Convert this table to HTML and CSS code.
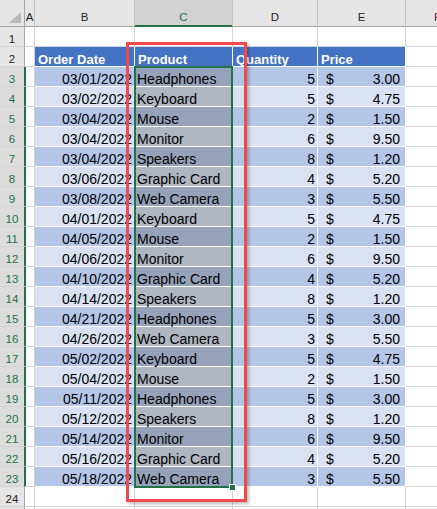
FILE: index.html
```html
<!DOCTYPE html>
<html>
<head>
<meta charset="utf-8">
<link rel="stylesheet" href="styles.css">
</head>
<body>
<div class="sheet">
  <div class="corner"><svg width="25" height="27" viewBox="0 0 25 27"><polygon points="21,12 21,23 9,23" fill="#b9b9b9"/></svg></div>
  <div class="ch">A</div><div class="ch">B</div><div class="ch sel">C</div><div class="ch">D</div><div class="ch">E</div><div class="ch f">F</div>

  <div class="rh">1</div><div class="c"></div><div class="c"></div><div class="c"></div><div class="c"></div><div class="c"></div><div class="c"></div>
  <div class="rh">2</div><div class="c"></div><div class="c h">Order Date</div><div class="c h">Product</div><div class="c h">Quantity</div><div class="c h">Price</div><div class="c"></div>

  <div class="rh s">3</div><div class="c"></div><div class="c t o r">03/01/2022</div><div class="c t o p">Headphones</div><div class="c t o r">5</div><div class="c t o pr"><span>$</span><span>3.00</span></div><div class="c"></div>
  <div class="rh s">4</div><div class="c"></div><div class="c t e r">03/02/2022</div><div class="c t e p">Keyboard</div><div class="c t e r">5</div><div class="c t e pr"><span>$</span><span>4.75</span></div><div class="c"></div>
  <div class="rh s">5</div><div class="c"></div><div class="c t o r">03/04/2022</div><div class="c t o p">Mouse</div><div class="c t o r">2</div><div class="c t o pr"><span>$</span><span>1.50</span></div><div class="c"></div>
  <div class="rh s">6</div><div class="c"></div><div class="c t e r">03/04/2022</div><div class="c t e p">Monitor</div><div class="c t e r">6</div><div class="c t e pr"><span>$</span><span>9.50</span></div><div class="c"></div>
  <div class="rh s">7</div><div class="c"></div><div class="c t o r">03/04/2022</div><div class="c t o p">Speakers</div><div class="c t o r">8</div><div class="c t o pr"><span>$</span><span>1.20</span></div><div class="c"></div>
  <div class="rh s">8</div><div class="c"></div><div class="c t e r">03/06/2022</div><div class="c t e p">Graphic Card</div><div class="c t e r">4</div><div class="c t e pr"><span>$</span><span>5.20</span></div><div class="c"></div>
  <div class="rh s">9</div><div class="c"></div><div class="c t o r">03/08/2022</div><div class="c t o p">Web Camera</div><div class="c t o r">3</div><div class="c t o pr"><span>$</span><span>5.50</span></div><div class="c"></div>
  <div class="rh s">10</div><div class="c"></div><div class="c t e r">04/01/2022</div><div class="c t e p">Keyboard</div><div class="c t e r">5</div><div class="c t e pr"><span>$</span><span>4.75</span></div><div class="c"></div>
  <div class="rh s">11</div><div class="c"></div><div class="c t o r">04/05/2022</div><div class="c t o p">Mouse</div><div class="c t o r">2</div><div class="c t o pr"><span>$</span><span>1.50</span></div><div class="c"></div>
  <div class="rh s">12</div><div class="c"></div><div class="c t e r">04/06/2022</div><div class="c t e p">Monitor</div><div class="c t e r">6</div><div class="c t e pr"><span>$</span><span>9.50</span></div><div class="c"></div>
  <div class="rh s">13</div><div class="c"></div><div class="c t o r">04/10/2022</div><div class="c t o p">Graphic Card</div><div class="c t o r">4</div><div class="c t o pr"><span>$</span><span>5.20</span></div><div class="c"></div>
  <div class="rh s">14</div><div class="c"></div><div class="c t e r">04/14/2022</div><div class="c t e p">Speakers</div><div class="c t e r">8</div><div class="c t e pr"><span>$</span><span>1.20</span></div><div class="c"></div>
  <div class="rh s">15</div><div class="c"></div><div class="c t o r">04/21/2022</div><div class="c t o p">Headphones</div><div class="c t o r">5</div><div class="c t o pr"><span>$</span><span>3.00</span></div><div class="c"></div>
  <div class="rh s">16</div><div class="c"></div><div class="c t e r">04/26/2022</div><div class="c t e p">Web Camera</div><div class="c t e r">3</div><div class="c t e pr"><span>$</span><span>5.50</span></div><div class="c"></div>
  <div class="rh s">17</div><div class="c"></div><div class="c t o r">05/02/2022</div><div class="c t o p">Keyboard</div><div class="c t o r">5</div><div class="c t o pr"><span>$</span><span>4.75</span></div><div class="c"></div>
  <div class="rh s">18</div><div class="c"></div><div class="c t e r">05/04/2022</div><div class="c t e p">Mouse</div><div class="c t e r">2</div><div class="c t e pr"><span>$</span><span>1.50</span></div><div class="c"></div>
  <div class="rh s">19</div><div class="c"></div><div class="c t o r">05/11/2022</div><div class="c t o p">Headphones</div><div class="c t o r">5</div><div class="c t o pr"><span>$</span><span>3.00</span></div><div class="c"></div>
  <div class="rh s">20</div><div class="c"></div><div class="c t e r">05/12/2022</div><div class="c t e p">Speakers</div><div class="c t e r">8</div><div class="c t e pr"><span>$</span><span>1.20</span></div><div class="c"></div>
  <div class="rh s">21</div><div class="c"></div><div class="c t o r">05/14/2022</div><div class="c t o p">Monitor</div><div class="c t o r">6</div><div class="c t o pr"><span>$</span><span>9.50</span></div><div class="c"></div>
  <div class="rh s">22</div><div class="c"></div><div class="c t e r">05/16/2022</div><div class="c t e p">Graphic Card</div><div class="c t e r">4</div><div class="c t e pr"><span>$</span><span>5.20</span></div><div class="c"></div>
  <div class="rh s">23</div><div class="c"></div><div class="c t o r">05/18/2022</div><div class="c t o p">Web Camera</div><div class="c t o r">3</div><div class="c t o pr"><span>$</span><span>5.50</span></div><div class="c"></div>

  <div class="rh">24</div><div class="c"></div><div class="c"></div><div class="c"></div><div class="c"></div><div class="c"></div><div class="c"></div>
  <div class="rh"></div><div class="c"></div><div class="c"></div><div class="c"></div><div class="c"></div><div class="c"></div><div class="c"></div>

  <div class="selbox"><div class="handle"></div></div>
  <div class="redbox"></div>
</div>
</body>
</html>
```
FILE: styles.css
```css
* { box-sizing: border-box; }
html, body { margin: 0; padding: 0; background: #fff; overflow: hidden; }
body { width: 437px; height: 509px; }

.sheet {
  position: relative;
  display: grid;
  grid-template-columns: 25px 10px 100px 98px 85px 88px 64px;
  grid-template-rows: 27px repeat(25, 20px);
  font-family: "Liberation Sans", Arial, sans-serif;
  color: #000;
}

.corner {
  background: #e6e6e6;
  border-right: 1px solid #a6a6a6;
  border-bottom: 1px solid #a6a6a6;
  overflow: hidden;
}
.corner svg { display: block; }

.ch {
  background: #e6e6e6;
  border-right: 1px solid #c4c4c4;
  border-bottom: 1px solid #a6a6a6;
  text-align: center;
  font-size: 11.5px;
  line-height: 14px;
  padding-top: 10px;
  color: #222;
}
.ch.sel {
  background: #d2d2d2;
  color: #217346;
  border-bottom-color: #217346;
  box-shadow: inset 0 -1px 0 #217346;
}
.ch.f { color: #6b1d24; }

.rh {
  background: #e6e6e6;
  border-right: 1px solid #a6a6a6;
  border-bottom: 1px solid #d4d4d4;
  text-align: center;
  font-size: 11.5px;
  line-height: 14px;
  padding-top: 5px;
  color: #222;
}
.rh.s {
  background: #dcdcdc;
  color: #217346;
  border-right-color: #217346;
  box-shadow: 1px 0 0 #217346;
}

.c {
  border-right: 1px solid #d4d4d4;
  border-bottom: 1px solid #d4d4d4;
  font-size: 14px;
  line-height: 14px;
  padding: 5px 2px 0 2px;
  white-space: nowrap;
}
.c.h {
  background: #4472c4;
  color: #fff;
  font-weight: bold;
  font-size: 13px;
  border-right-color: #fff;
  border-bottom-color: #fff;
  padding-left: 3px;
  padding-top: 6px;
}
.c.t { border-right-color: #fff; border-bottom-color: #fff; }
.c.o { background: #b4c6e7; }
.c.e { background: #d9e1f2; }
.c.r { text-align: right; }
.c.p.o { background: #96a2ba; }
.c.p.e { background: #b0b6c2; }
.c.pr {
  display: flex;
  justify-content: space-between;
  padding-left: 8px;
  padding-right: 5px;
}

.selbox {
  position: absolute;
  left: 134px;
  top: 66px;
  width: 99px;
  height: 422px;
  border: 2px solid #217346;
}
.handle {
  position: absolute;
  right: -5px;
  bottom: -5px;
  width: 7px;
  height: 7px;
  background: #217346;
  border: 1px solid #fff;
}
.redbox {
  position: absolute;
  left: 126px;
  top: 42px;
  width: 121px;
  height: 460px;
  border: 3px solid #f04a4f;
  box-shadow: 2px 2px 3px rgba(0, 0, 0, 0.25);
}
```
